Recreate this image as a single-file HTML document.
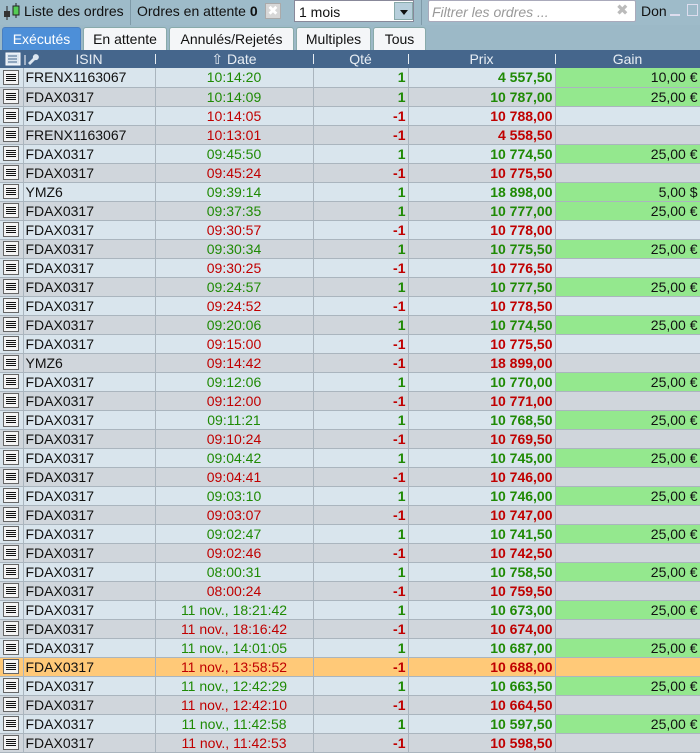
<!DOCTYPE html>
<html><head><meta charset="utf-8"><style>
*{box-sizing:border-box;margin:0;padding:0}
body{width:700px;height:743px;overflow:hidden;background:#9dbac8;font-family:"Liberation Sans",sans-serif;font-size:14px;color:#111}
.tb{position:absolute;top:0;left:0;width:700px;height:25px;background:#9ebbc9;}
.tb div{position:absolute;top:0;height:22px;line-height:22px}
.tabs{position:absolute;top:25px;left:0;width:700px;height:25px;background:#9cb9c7}
.tab{position:absolute;top:2px;height:23px;line-height:22px;background:#f4f6f8;border:1px solid #8aa;border-bottom:none;border-radius:3px 3px 0 0;text-align:center;font-size:14px}
.hdr{position:absolute;top:50px;left:0;width:700px;height:18px;background:#45668c;color:#e8eef4;font-size:14px}
.hdr span{position:absolute;top:0;line-height:18px;text-align:center}
.sep{position:absolute;top:4px;width:1px;height:10px;background:#e8eef4}
table{position:absolute;top:68px;left:0;border-collapse:collapse;width:700px;table-layout:fixed}
td{height:19px;padding:0 2px;border-right:1px solid #aab5be;border-bottom:1px solid #aab5be;white-space:nowrap;overflow:hidden;line-height:18px}
tr:nth-child(odd) td{background:#d9e5ed}
tr:nth-child(even) td{background:#d0d6dc}
tr.hl td{background:#ffc978!important}
.ic{padding:0}
.ico{width:16px;height:15px;margin-left:3px;background:#f4f4f4;border:1px solid #666;position:relative}
.ico:after{content:"";position:absolute;left:2px;top:3px;width:10px;height:8px;background:repeating-linear-gradient(#111 0 1px,transparent 1px 2px)}
.d{text-align:center}.r{text-align:right;font-weight:bold}
.g{color:#1f8a04}.rd{color:#c00000}
td.gn{background:#94e88e!important;text-align:right}
</style></head><body>
<div class="tb">
<div style="left:2px;width:20px"><svg width="20" height="22"><line x1="5" y1="6" x2="5" y2="20" stroke="#222"/><rect x="2" y="11" width="6" height="6" fill="#333"/><line x1="14" y1="3" x2="14" y2="18" stroke="#222"/><rect x="11" y="6" width="6" height="9" fill="#5c5" stroke="#222"/></svg></div>
<div style="left:24px">Liste des ordres</div>
<div style="left:130px;width:1px;height:25px;background:#7f9aa8"></div>
<div style="left:137px">Ordres en attente <b>0</b></div>
<div style="left:265px;top:3px;width:16px;height:16px;background:#d7d7d7;border:1px solid #aaa;color:#fff;font-size:13px;line-height:14px;text-align:center">✖</div>
<div style="left:294px;top:0;width:120px;height:22px;background:#fff;border:1px solid #889;padding-left:4px">1 mois</div>
<div style="left:394px;top:2px;width:19px;height:18px;background:#b7cfdc;border:1px solid #8aa"><svg width="18" height="18"><path d="M5 7h8l-4 5z" fill="#111"/></svg></div>
<div style="left:421px;width:1px;height:25px;background:#7f9aa8"></div>
<div style="left:428px;width:208px;background:#fff;border:1px solid #aab;border-radius:2px;padding-left:3px;color:#999;font-style:italic">Filtrer les ordres ...</div>
<div style="left:616px;color:#bbb;font-size:15px">✖</div>
<div style="left:641px">Don</div>
<div style="left:670px;top:14px;width:10px;height:2px;background:#dde;"></div>
<div style="left:687px;top:4px;width:11px;height:12px;border:1px solid #dde;"></div>
</div>
<div class="tabs">
<div class="tab" style="left:2px;width:79px;background:#4d8fd8;color:#fff;border-color:#4a7fc0">Exécutés</div>
<div class="tab" style="left:83px;width:84px">En attente</div>
<div class="tab" style="left:169px;width:125px">Annulés/Rejetés</div>
<div class="tab" style="left:296px;width:75px">Multiples</div>
<div class="tab" style="left:373px;width:53px">Tous</div>
</div>
<div class="hdr">
<svg style="position:absolute;left:5px;top:2px" width="34" height="15"><rect x="1" y="1" width="14" height="12" fill="#dce6f0" stroke="#fff"/><path d="M3 4h9M3 7h9M3 10h9" stroke="#45668c"/><line x1="20" y1="3" x2="20" y2="13" stroke="#fff"/><path d="M25 13l5-5a3 3 0 1 0-2-2l-5 5z" fill="#dce6f0"/></svg>
<span style="left:23px;width:132px">ISIN</span><div class="sep" style="left:155px"></div>
<span style="left:155px;width:158px">⇧ Date</span><div class="sep" style="left:313px"></div>
<span style="left:313px;width:95px">Qté</span><div class="sep" style="left:408px"></div>
<span style="left:408px;width:147px">Prix</span><div class="sep" style="left:555px"></div>
<span style="left:555px;width:145px">Gain</span>
</div>
<table>
<colgroup><col style="width:23px"><col style="width:132px"><col style="width:158px"><col style="width:95px"><col style="width:147px"><col style="width:145px"></colgroup>
<tbody id="tb">
<tr><td class="ic"><div class="ico"></div></td><td>FRENX1163067</td><td class="d g">10:14:20</td><td class="r g">1</td><td class="r g">4 557,50</td><td class="gn">10,00 €</td></tr>
<tr><td class="ic"><div class="ico"></div></td><td>FDAX0317</td><td class="d g">10:14:09</td><td class="r g">1</td><td class="r g">10 787,00</td><td class="gn">25,00 €</td></tr>
<tr><td class="ic"><div class="ico"></div></td><td>FDAX0317</td><td class="d rd">10:14:05</td><td class="r rd">-1</td><td class="r rd">10 788,00</td><td></td></tr>
<tr><td class="ic"><div class="ico"></div></td><td>FRENX1163067</td><td class="d rd">10:13:01</td><td class="r rd">-1</td><td class="r rd">4 558,50</td><td></td></tr>
<tr><td class="ic"><div class="ico"></div></td><td>FDAX0317</td><td class="d g">09:45:50</td><td class="r g">1</td><td class="r g">10 774,50</td><td class="gn">25,00 €</td></tr>
<tr><td class="ic"><div class="ico"></div></td><td>FDAX0317</td><td class="d rd">09:45:24</td><td class="r rd">-1</td><td class="r rd">10 775,50</td><td></td></tr>
<tr><td class="ic"><div class="ico"></div></td><td>YMZ6</td><td class="d g">09:39:14</td><td class="r g">1</td><td class="r g">18 898,00</td><td class="gn">5,00 $</td></tr>
<tr><td class="ic"><div class="ico"></div></td><td>FDAX0317</td><td class="d g">09:37:35</td><td class="r g">1</td><td class="r g">10 777,00</td><td class="gn">25,00 €</td></tr>
<tr><td class="ic"><div class="ico"></div></td><td>FDAX0317</td><td class="d rd">09:30:57</td><td class="r rd">-1</td><td class="r rd">10 778,00</td><td></td></tr>
<tr><td class="ic"><div class="ico"></div></td><td>FDAX0317</td><td class="d g">09:30:34</td><td class="r g">1</td><td class="r g">10 775,50</td><td class="gn">25,00 €</td></tr>
<tr><td class="ic"><div class="ico"></div></td><td>FDAX0317</td><td class="d rd">09:30:25</td><td class="r rd">-1</td><td class="r rd">10 776,50</td><td></td></tr>
<tr><td class="ic"><div class="ico"></div></td><td>FDAX0317</td><td class="d g">09:24:57</td><td class="r g">1</td><td class="r g">10 777,50</td><td class="gn">25,00 €</td></tr>
<tr><td class="ic"><div class="ico"></div></td><td>FDAX0317</td><td class="d rd">09:24:52</td><td class="r rd">-1</td><td class="r rd">10 778,50</td><td></td></tr>
<tr><td class="ic"><div class="ico"></div></td><td>FDAX0317</td><td class="d g">09:20:06</td><td class="r g">1</td><td class="r g">10 774,50</td><td class="gn">25,00 €</td></tr>
<tr><td class="ic"><div class="ico"></div></td><td>FDAX0317</td><td class="d rd">09:15:00</td><td class="r rd">-1</td><td class="r rd">10 775,50</td><td></td></tr>
<tr><td class="ic"><div class="ico"></div></td><td>YMZ6</td><td class="d rd">09:14:42</td><td class="r rd">-1</td><td class="r rd">18 899,00</td><td></td></tr>
<tr><td class="ic"><div class="ico"></div></td><td>FDAX0317</td><td class="d g">09:12:06</td><td class="r g">1</td><td class="r g">10 770,00</td><td class="gn">25,00 €</td></tr>
<tr><td class="ic"><div class="ico"></div></td><td>FDAX0317</td><td class="d rd">09:12:00</td><td class="r rd">-1</td><td class="r rd">10 771,00</td><td></td></tr>
<tr><td class="ic"><div class="ico"></div></td><td>FDAX0317</td><td class="d g">09:11:21</td><td class="r g">1</td><td class="r g">10 768,50</td><td class="gn">25,00 €</td></tr>
<tr><td class="ic"><div class="ico"></div></td><td>FDAX0317</td><td class="d rd">09:10:24</td><td class="r rd">-1</td><td class="r rd">10 769,50</td><td></td></tr>
<tr><td class="ic"><div class="ico"></div></td><td>FDAX0317</td><td class="d g">09:04:42</td><td class="r g">1</td><td class="r g">10 745,00</td><td class="gn">25,00 €</td></tr>
<tr><td class="ic"><div class="ico"></div></td><td>FDAX0317</td><td class="d rd">09:04:41</td><td class="r rd">-1</td><td class="r rd">10 746,00</td><td></td></tr>
<tr><td class="ic"><div class="ico"></div></td><td>FDAX0317</td><td class="d g">09:03:10</td><td class="r g">1</td><td class="r g">10 746,00</td><td class="gn">25,00 €</td></tr>
<tr><td class="ic"><div class="ico"></div></td><td>FDAX0317</td><td class="d rd">09:03:07</td><td class="r rd">-1</td><td class="r rd">10 747,00</td><td></td></tr>
<tr><td class="ic"><div class="ico"></div></td><td>FDAX0317</td><td class="d g">09:02:47</td><td class="r g">1</td><td class="r g">10 741,50</td><td class="gn">25,00 €</td></tr>
<tr><td class="ic"><div class="ico"></div></td><td>FDAX0317</td><td class="d rd">09:02:46</td><td class="r rd">-1</td><td class="r rd">10 742,50</td><td></td></tr>
<tr><td class="ic"><div class="ico"></div></td><td>FDAX0317</td><td class="d g">08:00:31</td><td class="r g">1</td><td class="r g">10 758,50</td><td class="gn">25,00 €</td></tr>
<tr><td class="ic"><div class="ico"></div></td><td>FDAX0317</td><td class="d rd">08:00:24</td><td class="r rd">-1</td><td class="r rd">10 759,50</td><td></td></tr>
<tr><td class="ic"><div class="ico"></div></td><td>FDAX0317</td><td class="d g">11 nov., 18:21:42</td><td class="r g">1</td><td class="r g">10 673,00</td><td class="gn">25,00 €</td></tr>
<tr><td class="ic"><div class="ico"></div></td><td>FDAX0317</td><td class="d rd">11 nov., 18:16:42</td><td class="r rd">-1</td><td class="r rd">10 674,00</td><td></td></tr>
<tr><td class="ic"><div class="ico"></div></td><td>FDAX0317</td><td class="d g">11 nov., 14:01:05</td><td class="r g">1</td><td class="r g">10 687,00</td><td class="gn">25,00 €</td></tr>
<tr class="hl"><td class="ic"><div class="ico"></div></td><td>FDAX0317</td><td class="d rd">11 nov., 13:58:52</td><td class="r rd">-1</td><td class="r rd">10 688,00</td><td></td></tr>
<tr><td class="ic"><div class="ico"></div></td><td>FDAX0317</td><td class="d g">11 nov., 12:42:29</td><td class="r g">1</td><td class="r g">10 663,50</td><td class="gn">25,00 €</td></tr>
<tr><td class="ic"><div class="ico"></div></td><td>FDAX0317</td><td class="d rd">11 nov., 12:42:10</td><td class="r rd">-1</td><td class="r rd">10 664,50</td><td></td></tr>
<tr><td class="ic"><div class="ico"></div></td><td>FDAX0317</td><td class="d g">11 nov., 11:42:58</td><td class="r g">1</td><td class="r g">10 597,50</td><td class="gn">25,00 €</td></tr>
<tr><td class="ic"><div class="ico"></div></td><td>FDAX0317</td><td class="d rd">11 nov., 11:42:53</td><td class="r rd">-1</td><td class="r rd">10 598,50</td><td></td></tr>
</tbody></table>
</body></html>
